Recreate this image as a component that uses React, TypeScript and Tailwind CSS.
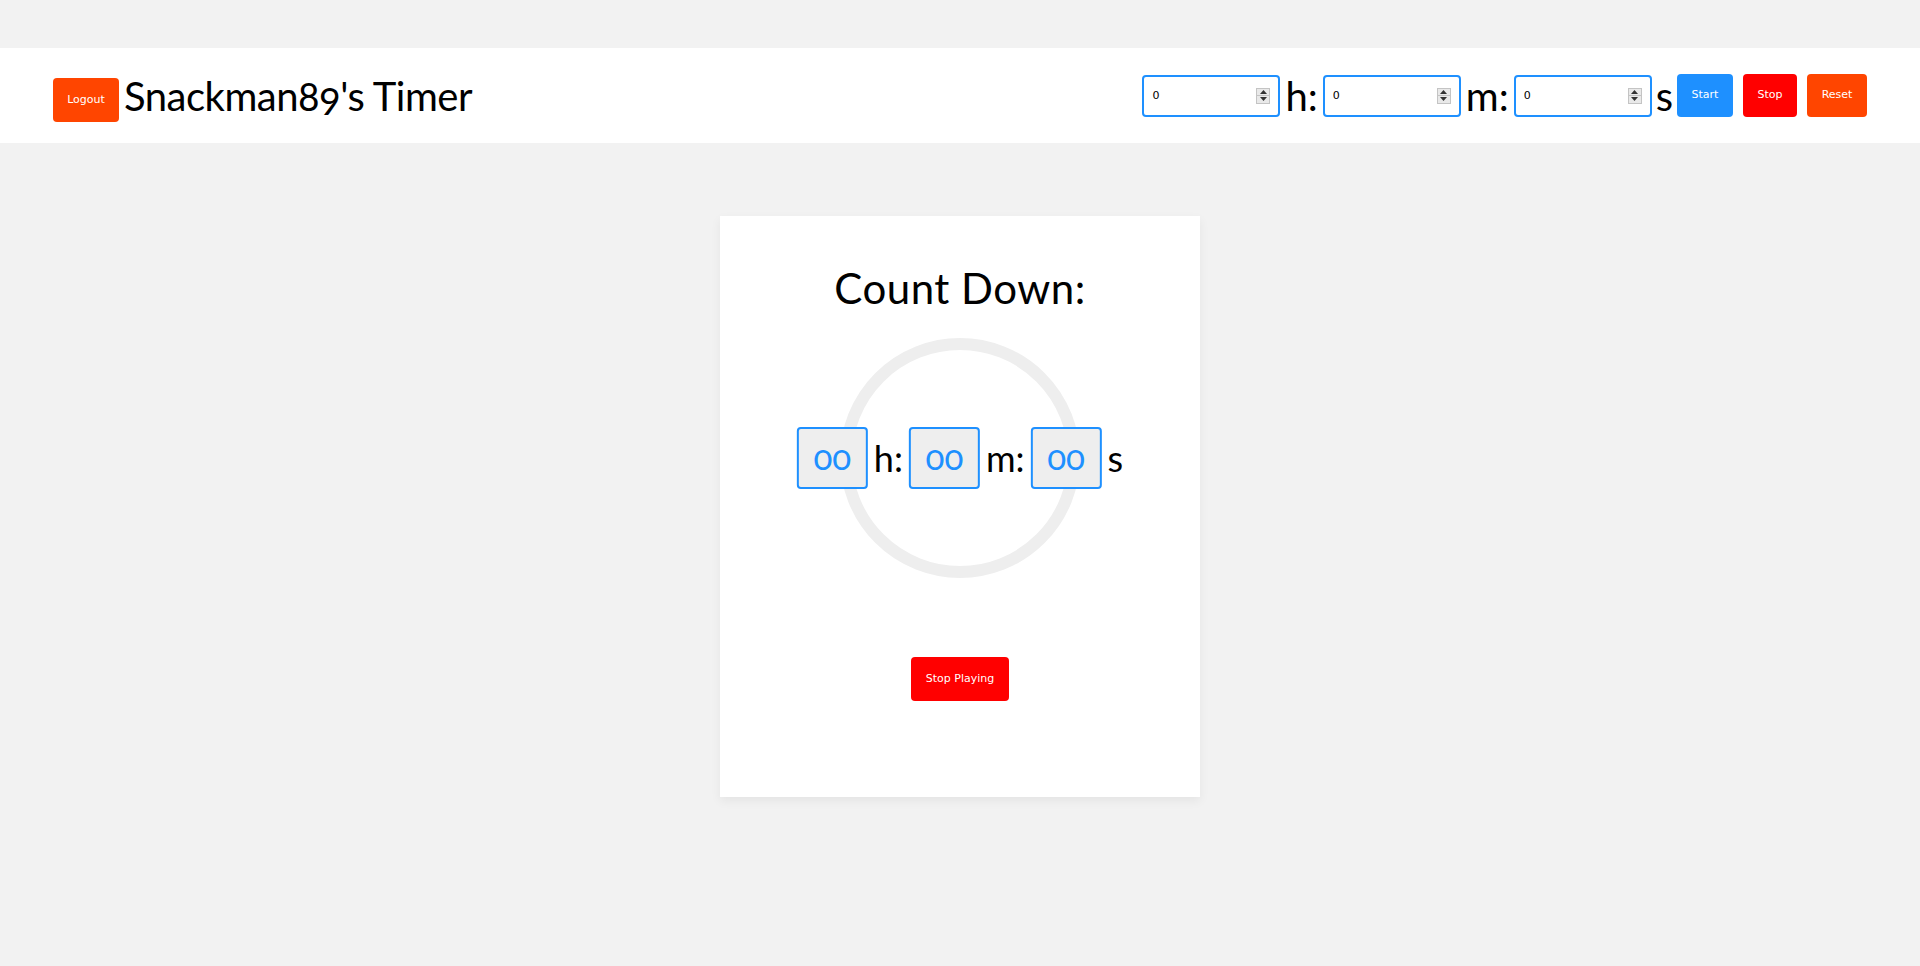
import React from 'react';

const display = "font-['Lato','Open_Sans',sans-serif] font-normal oldstyle-nums";
const ui = "font-['DejaVu_Sans','Liberation_Sans',sans-serif]";

// Fake Windows-style spin buttons drawn over the number field.
function Spinner() {
  return (
    <div className="pointer-events-none absolute right-[10px] top-1/2 -translate-y-1/2 w-[14px] h-[16px] border border-[#c4c4c4] bg-[#e9e9e9] flex flex-col">
      <div className="flex-1 flex items-center justify-center border-b border-[#c4c4c4]">
        <svg width="7" height="4" viewBox="0 0 7 4">
          <path d="M3.5 0 L7 4 L0 4 Z" fill="#333" />
        </svg>
      </div>
      <div className="flex-1 flex items-center justify-center">
        <svg width="7" height="4" viewBox="0 0 7 4">
          <path d="M0 0 L7 0 L3.5 4 Z" fill="#333" />
        </svg>
      </div>
    </div>
  );
}

function TimeInput() {
  return (
    <div className="relative">
      <input
        type="text"
        defaultValue="0"
        className={`${ui} w-[138px] h-[42px] border-2 border-[#1e90ff] rounded-[4px] bg-white pl-[8px] text-[11px] text-black outline-none`}
      />
      <Spinner />
    </div>
  );
}

function Unit({ label, className = '' }: { label: string; className?: string }) {
  return <span className={`${display} text-[40px] leading-none text-black ${className}`}>{label}</span>;
}

function DigitBox() {
  return (
    <div
      className={`${display} w-[71px] h-[62px] border-2 border-[#1e90ff] rounded-[4px] bg-[#eeeeee] text-[#1e90ff] text-[35px] flex items-center justify-center pb-[4px]`}
    >
      00
    </div>
  );
}

export default function App() {
  return (
    <div className="min-h-screen bg-[#f2f2f2] pt-[48px]">
      <header className="h-[95px] bg-white flex items-center justify-between px-[53px]">
        <div className="flex items-center">
          <button
            className={`${ui} mt-[9px] w-[66px] h-[44px] rounded-[4px] bg-[#ff4500] text-white text-[11px]`}
          >
            Logout
          </button>
          <h1 className={`${display} ml-[5px] text-[40px] leading-none tracking-[-0.5px] text-black`}>
            Snackman89's Timer
          </h1>
        </div>

        <div className="flex items-center">
          <TimeInput />
          <Unit label="h:" className="mx-[5px]" />
          <TimeInput />
          <Unit label="m:" className="mx-[5px]" />
          <TimeInput />
          <Unit label="s" className="mx-[4px]" />
          <button className={`${ui} w-[56px] h-[43px] rounded-[4px] bg-[#1e90ff] text-white text-[11px]`}>
            Start
          </button>
          <button className={`${ui} ml-[10px] w-[54px] h-[43px] rounded-[4px] bg-[#ff0000] text-white text-[11px]`}>
            Stop
          </button>
          <button className={`${ui} ml-[10px] w-[60px] h-[43px] rounded-[4px] bg-[#ff4500] text-white text-[11px]`}>
            Reset
          </button>
        </div>
      </header>

      <main className="mt-[73px] mx-auto w-[480px] h-[581px] bg-white shadow-[0_4px_10px_rgba(0,0,0,0.06)] flex flex-col items-center pt-[47px]">
        <h2 className={`${display} text-[42px] leading-[50px] tracking-[0.5px] text-black`}>Count Down:</h2>

        <div className="relative mt-[25px] w-[240px] h-[240px]">
          <div className="w-full h-full rounded-full border-[12px] border-[#eeeeee]" />
          <div className="absolute left-1/2 top-1/2 -translate-x-1/2 -translate-y-1/2 flex items-center whitespace-nowrap">
            <DigitBox />
            <span className={`${display} mx-[6px] text-[36px] leading-none text-black`}>h:</span>
            <DigitBox />
            <span className={`${display} mx-[6px] text-[36px] leading-none text-black`}>m:</span>
            <DigitBox />
            <span className={`${display} ml-[6px] text-[36px] leading-none text-black`}>s</span>
          </div>
        </div>

        <button
          className={`${ui} mt-[79px] w-[98px] h-[44px] rounded-[4px] bg-[#ff0000] text-white text-[11px]`}
        >
          Stop Playing
        </button>
      </main>
    </div>
  );
}
